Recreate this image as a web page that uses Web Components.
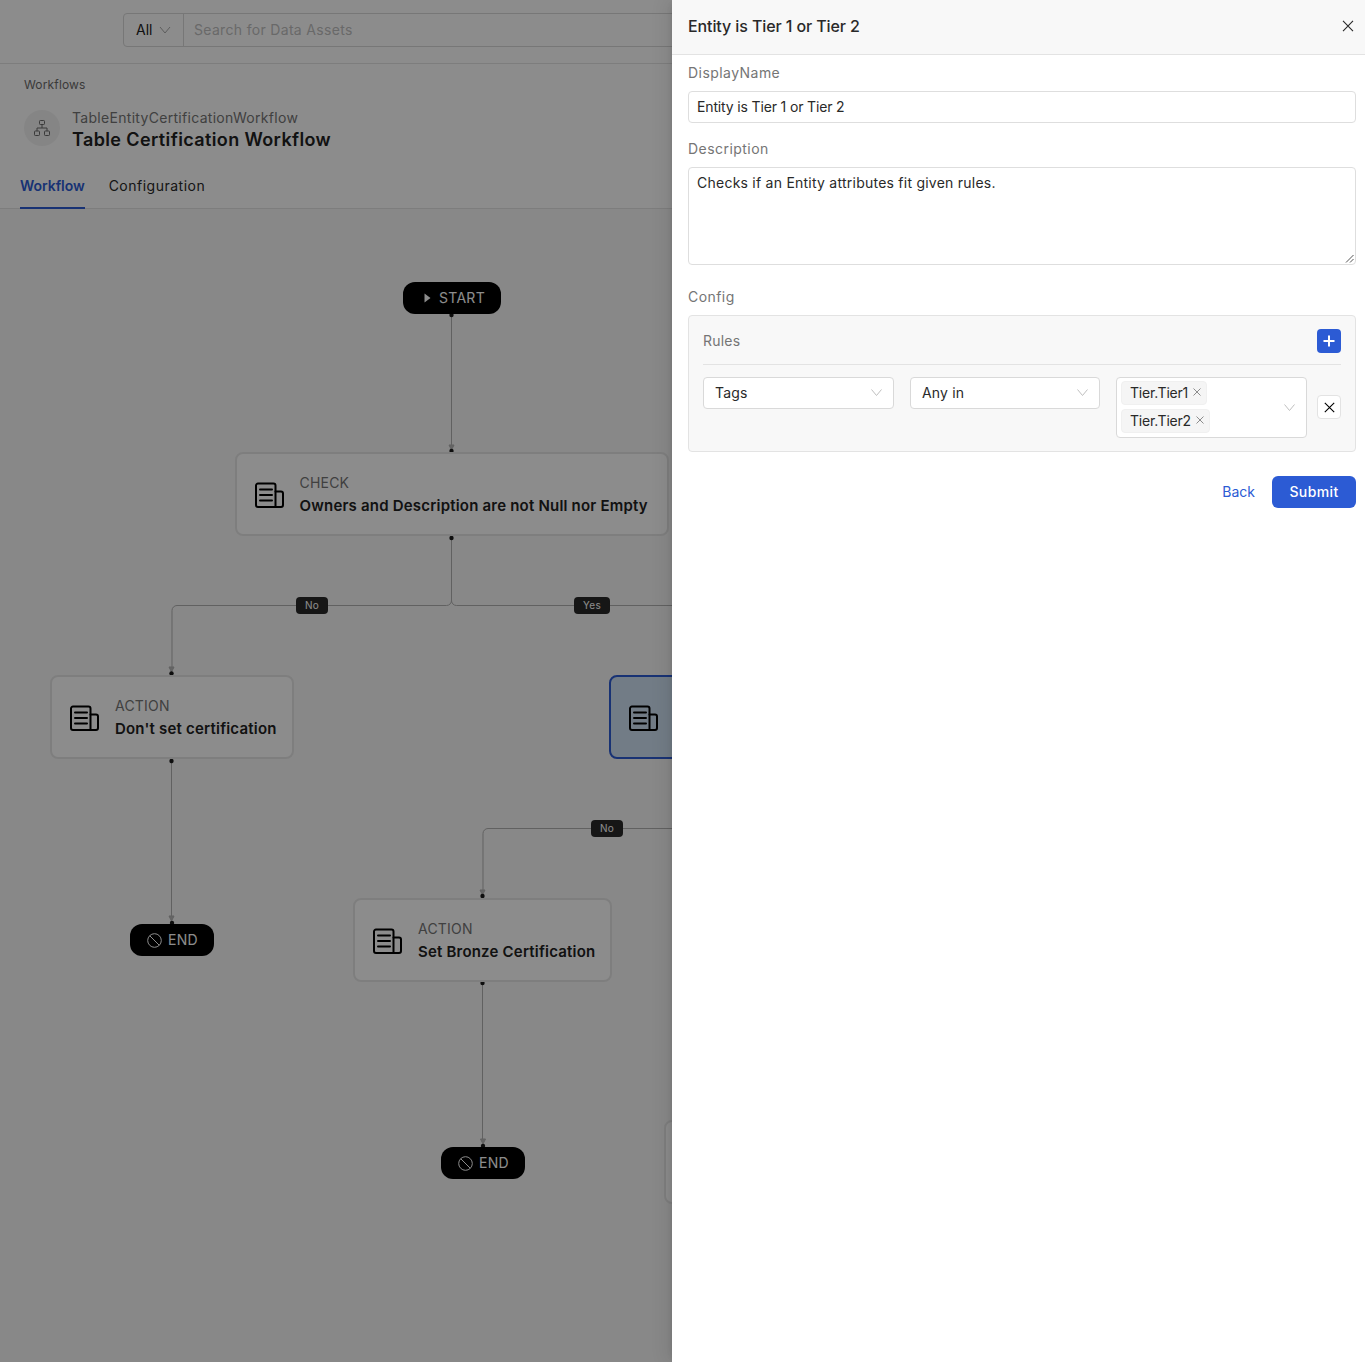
<!DOCTYPE html>
<html><head><meta charset="utf-8"><title>Workflow</title>
<style>html,body{margin:0;padding:0;background:#fff}body{font-family:"Inter","Liberation Sans",sans-serif}</style>
</head><body>
<wf-app></wf-app>
<script>
const FONT='"Inter","Noto Sans","Liberation Sans",sans-serif';
const docIcon=`<svg width="29" height="27" viewBox="0 0 29 27" fill="none" stroke="#000" stroke-width="2" stroke-linejoin="round" stroke-linecap="round"><path d="M3 1.500h15.500a2 2 0 0 1 2 2v21.500h-17.500a2 2 0 0 1-2-2v-19.500a2 2 0 0 1 2-2z"/><path d="M20.500 9.500h5.500a2 2 0 0 1 2 2v11.500a2 2 0 0 1-2 2h-5.500"/><path d="M5 7.500h12M5 13h12M5 18.500h12"/></svg>`;
class Base extends HTMLElement{constructor(){super();this.attachShadow({mode:'open'}).innerHTML=this.constructor.html;}}
function def(n,html){customElements.define(n,class extends Base{static html=html;});}

def('wf-search',`<style>:host{display:flex;height:64px;box-sizing:border-box;border-bottom:1px solid #e3e3e3;background:#fff;padding:13px 0 0 123px;overflow:hidden}
.box{display:flex;height:34px;width:900px;box-sizing:border-box;border:1px solid #d9d9d9;border-radius:4px;font-size:14px;line-height:32px}
.all{width:60px;box-sizing:border-box;padding-left:12px;border-right:1px solid #d9d9d9;color:#212121;display:flex;align-items:center;gap:7px}
.ph{padding-left:10px;color:#bfbfbf;letter-spacing:.32px}</style>
<div class="box"><div class="all">All<svg width="12" height="8" viewBox="0 0 12 8" fill="none" stroke="#aaa"><path d="M1 1l5 6 5-6"/></svg></div><div class="ph">Search for Data Assets</div></div>`);

def('wf-title',`<style>:host{display:block;background:#fff;padding:13px 24px 0;height:100px;box-sizing:border-box}
.crumb{font-size:12px;line-height:16px;color:#6b6b6b;letter-spacing:.15px}
.row{display:flex;align-items:flex-start;gap:12px;margin-top:17px}
.ic{width:36px;height:36px;border-radius:50%;background:#f3f3f3;display:flex;align-items:center;justify-content:center}
.txt{margin-top:-3px}
.sub{font-size:14px;line-height:21px;color:#757575;letter-spacing:.3px;white-space:nowrap}
.name{font-size:18px;line-height:24px;font-weight:600;color:#212121;white-space:nowrap;letter-spacing:.38px}</style>
<div class="crumb">Workflows</div>
<div class="row"><div class="ic"><svg width="18" height="18" viewBox="0 0 18 18" fill="none" stroke="#6b6b6b" stroke-width="1"><rect x="6.500" y="1.500" width="5" height="4" rx=".8"/><rect x="1.500" y="12" width="5" height="4.500" rx=".8"/><rect x="11.500" y="12" width="5" height="4.500" rx=".8"/><path d="M9 5.500V9M4 12V9h10v3"/></svg></div>
<div class="txt"><div class="sub">TableEntityCertificationWorkflow</div><div class="name">Table Certification Workflow</div></div></div>`);

def('wf-tabs',`<style>:host{display:flex;height:45px;box-sizing:border-box;padding-left:20px;background:#fff;border-bottom:1px solid #e3e3e3;font-size:14px;line-height:44px;color:#292929}
.a{color:#2c5bd4;font-weight:600;border-bottom:2px solid #2c5bd4;height:45px;box-sizing:border-box;letter-spacing:-.05px;margin-right:24px}
.b{letter-spacing:.5px}</style><span class="a">Workflow</span><span class="b">Configuration</span>`);

def('wf-pill',`<style>:host{position:absolute;display:flex;align-items:center;justify-content:center;gap:8px;height:32px;box-sizing:border-box;background:#000;border-radius:12px;color:#fff;font-size:14px;letter-spacing:.3px;font-weight:400;line-height:30px}svg{display:block}</style><slot name="icon"></slot><slot></slot>`);

def('wf-node',`<style>:host{position:absolute;display:flex;align-items:center;box-sizing:border-box;height:84px;padding-left:18px;gap:16px;background:#fff;border:2px solid #e6e6e6;border-radius:8px;white-space:nowrap}
:host([sel]){background:#d0e2f5;border-color:#2c5bd4}
.ico{display:flex;margin-top:3px}
.c{padding-top:2px}
.l{font-size:14px;line-height:21px;color:#757575;letter-spacing:.2px}
.t{font-size:15px;line-height:24px;font-weight:600;color:#212121;letter-spacing:.2px;margin-top:1px}svg{flex:none}</style>
<span class="ico">${docIcon}</span><div class="c"><div class="l"><slot name="label"></slot></div><div class="t"><slot></slot></div></div>`);

def('wf-edge-label',`<style>:host{position:absolute;height:17px;box-sizing:border-box;background:#292929;border-radius:4px;color:#fff;font-size:10px;line-height:17px;text-align:center;letter-spacing:.3px}</style><slot></slot>`);

const dot=(x,y)=>`<circle cx="${x}" cy="${y}" r="2.200" fill="#1a1a1a"/>`;
const arrow=(x,y)=>`<path d="M${x-2.500} ${y-5}h5l-2.500 5z" fill="#b9b9b9"/>`;
def('wf-canvas',`<style>:host{position:relative;display:block;height:1153px;background:#f8f8f8;overflow:hidden}
svg.e{position:absolute;left:0;top:0}</style>
<svg class="e" width="800" height="1153" viewBox="0 209 800 1153" fill="none" stroke="#b1b1b1" stroke-width="1">
<path d="M451.500 316V448"/><path d="M451.500 538V600a5 5 0 0 1-5 5.500H177a5 5 0 0 0-5 5V668"/><path d="M451.500 600a5 5 0 0 0 5 5.500H800"/>
<path d="M171.500 762V918"/><path d="M800 828.500H488a5 5 0 0 0-5 5V890"/><path d="M482.500 985V1141"/>
${arrow(451.5,450)}${arrow(171.5,672)}${arrow(171.5,921)}${arrow(482.5,895)}${arrow(483,1144)}
<g stroke="none">${dot(451.500,315)}${dot(451.500,451)}${dot(451.500,538)}${dot(171.500,673.500)}${dot(171.500,761)}${dot(172,923)}${dot(482.500,896)}${dot(482.500,983)}${dot(483,1146)}</g></svg>
<slot></slot>`);

def('wf-field',`<style>:host{display:block}.lab{font-size:14px;line-height:21px;color:#757575;margin-bottom:8px;letter-spacing:.45px}</style><div class="lab"><slot name="label"></slot></div><slot></slot>`);
def('wf-input',`<style>:host{position:relative;display:block;box-sizing:border-box;height:32px;border:1px solid #dedede;border-radius:4px;background:#fff;padding:0 8px;font-size:14px;line-height:30px;color:#292929;letter-spacing:-.15px}
:host([area]){height:98px;letter-spacing:.24px}
svg{position:absolute;right:1px;bottom:1px;display:none}:host([area]) svg{display:block}</style><slot></slot>
<svg width="9" height="9" viewBox="0 0 9 9" stroke="#555" stroke-width="1"><path d="M1 8.500L8.500 1M5 8.500L8.500 5"/></svg>`);
def('wf-select',`<style>:host{position:relative;display:block;box-sizing:border-box;min-height:32px;border:1px solid #d9d9d9;border-radius:4px;background:#fff;padding:0 11px;font-size:14px;line-height:30px;color:#292929;letter-spacing:.15px}
svg{position:absolute;right:11px;top:50%;margin-top:-4px}</style><slot></slot>
<svg width="11" height="7" viewBox="0 0 11 7" fill="none" stroke="#bfbfbf"><path d="M.5.500l5 6 5-6"/></svg>`);
def('wf-tag',`<style>:host{display:flex;width:max-content;align-items:center;gap:5px;height:24px;box-sizing:border-box;background:#f5f5f5;border:1px solid #f0f0f0;border-radius:4px;padding:0 5px 0 8px;font-size:14px;line-height:22px;color:#292929;letter-spacing:-.2px}
svg{margin-top:-3px}</style><slot></slot><svg width="8" height="8" viewBox="0 0 8 8" stroke="#8c8c8c" fill="none"><path d="M.5.500l7 7M7.500.500l-7 7"/></svg>`);

def('wf-drawer',`<style>:host{position:absolute;top:0;right:0;bottom:0;width:693px;background:#fff;box-shadow:-6px 0 16px rgba(0,0,0,.08),-3px 0 6px -4px rgba(0,0,0,.12);display:flex;flex-direction:column}
.head{height:55px;box-sizing:border-box;background:#f8f8f8;border-bottom:1px solid #e3e3e3;display:flex;align-items:center;justify-content:space-between;padding:0 11px 2px 16px;font-size:16px;font-weight:500;color:#292929;letter-spacing:-.1px;flex:none}
.body{padding:7px 9px 0 16px;display:flex;flex-direction:column;gap:16px}
.foot{display:flex;justify-content:flex-end;align-items:center;gap:17px;margin-top:8px}
.back{color:#2c5bd4;font-size:14px;padding-bottom:1px}
.sub{width:84px;height:32px;background:#2c5bd4;color:#fff;border-radius:6px;font-size:14px;font-weight:500;letter-spacing:.4px;display:flex;align-items:center;justify-content:center;padding-bottom:1px;box-sizing:border-box}
.rules{background:#f8f8f8;border:1px solid #e3e3e3;border-radius:4px;padding:13px 14px 14px;height:137px;box-sizing:border-box}
.rh{display:flex;justify-content:space-between;align-items:center;height:24px;padding-bottom:11px;border-bottom:1px solid #e3e3e3;font-size:14px;color:#757575;margin-bottom:12px;letter-spacing:.2px}
.rh span{margin-top:-1px}
.plus{width:24px;height:24px;border-radius:4px;background:#2c5bd4;display:flex;align-items:center;justify-content:center}
.row{display:grid;grid-template-columns:191px 190px 191px 18px;column-gap:16px;align-items:start}
.row>.t{display:flex;flex-direction:column;gap:4px;padding:3px 4px 4px}
.x{width:24px;height:24px;margin:18px 0 0 -6px;box-sizing:border-box;border:1px solid #e3e3e3;border-radius:4px;background:#fff;display:flex;align-items:center;justify-content:center}</style>
<div class="head">Entity is Tier 1 or Tier 2<svg width="12" height="12" viewBox="0 0 12 12" fill="none" stroke="#292929" stroke-width="1.100"><path d="M1 .8l10 10.400M11 .8L1 11.200"/></svg></div>
<div class="body">
<wf-field><span slot="label">DisplayName</span><wf-input>Entity is Tier 1 or Tier 2</wf-input></wf-field>
<wf-field style="margin-top:-1px"><span slot="label">Description</span><wf-input area>Checks if an Entity attributes fit given rules.</wf-input></wf-field>
<wf-field style="margin-top:5px"><span slot="label">Config</span>
<div class="rules"><div class="rh"><span>Rules</span><div class="plus"><svg width="12" height="12" viewBox="0 0 12 12" stroke="#fff" stroke-width="2"><path d="M6 .5v11M.5 6h11"/></svg></div></div>
<div class="row"><wf-select>Tags</wf-select><wf-select>Any in</wf-select><wf-select class="t"><wf-tag>Tier.Tier1</wf-tag><wf-tag>Tier.Tier2</wf-tag></wf-select><div class="x"><svg width="11" height="11" viewBox="0 0 11 11" stroke="#000" stroke-width="1.100" fill="none"><path d="M.8.800l9.400 9.400M10.200.800L.8 10.200"/></svg></div></div></div></wf-field>
<div class="foot"><span class="back">Back</span><span class="sub">Submit</span></div>
</div>`);

const endIcon=`<svg slot="icon" width="15" height="15" viewBox="0 0 15 15" fill="none" stroke="#fff"><circle cx="7.500" cy="7.500" r="6.800"/><path d="M2.700 2.700l9.600 9.600"/></svg>`;
def('wf-app',`<style>:host{position:relative;display:block;width:1365px;height:1362px;overflow:hidden;font-family:${FONT}}
.scrim{position:absolute;inset:0;background:rgba(0,0,0,.45)}
svg{display:block}</style>
<wf-search></wf-search><wf-title></wf-title><wf-tabs></wf-tabs>
<wf-canvas>
<wf-pill style="left:403px;top:73px;width:98px;gap:8px;padding-left:5px"><svg slot="icon" width="7" height="10" viewBox="0 0 7 10" fill="#fff"><path d="M.5.500l6 4.500-6 4.500z"/></svg>START</wf-pill>
<wf-node style="left:234.500px;top:243px;width:434px"><span slot="label">CHECK</span>Owners and Description are not Null nor Empty</wf-node>
<wf-edge-label style="left:296px;top:388px;width:32px">No</wf-edge-label>
<wf-edge-label style="left:574px;top:388px;width:36px">Yes</wf-edge-label>
<wf-node style="left:50px;top:466px;width:244px"><span slot="label">ACTION</span>Don't set certification</wf-node>
<wf-node sel style="left:609px;top:466px;width:320px"><span slot="label">ACTION</span></wf-node>
<wf-edge-label style="left:591px;top:611px;width:32px">No</wf-edge-label>
<wf-node style="left:353px;top:689px;width:259px"><span slot="label">ACTION</span>Set Bronze Certification</wf-node>
<wf-pill style="left:130px;top:715px;width:84px;gap:6px;padding-left:1px">${endIcon}END</wf-pill>
<wf-pill style="left:441px;top:938px;width:84px;gap:6px;padding-left:1px">${endIcon}END</wf-pill>
<wf-node style="left:664px;top:911px;width:300px"><span slot="label">ACTION</span></wf-node>
</wf-canvas>
<div class="scrim"></div>
<wf-drawer></wf-drawer>`);
</script>
</body></html>
